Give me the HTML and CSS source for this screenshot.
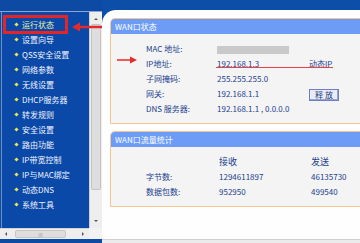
FILE: index.html
```html
<!DOCTYPE html>
<html lang="zh-CN">

<head>
    <meta charset="UTF-8">
    <title>WAN口状态</title>
    <link rel="stylesheet" href="styles.css">
</head>

<body>
    <div class="screen">
        <!-- left menu frame -->
        <div class="left">
            <div class="nav-frame">
                <ul class="menu">
                    <li class="on">运行状态</li>
                    <li>设置向导</li>
                    <li>QSS安全设置</li>
                    <li>网络参数</li>
                    <li>无线设置</li>
                    <li>DHCP服务器</li>
                    <li>转发规则</li>
                    <li>安全设置</li>
                    <li>路由功能</li>
                    <li>IP带宽控制</li>
                    <li>IP与MAC绑定</li>
                    <li>动态DNS</li>
                    <li>系统工具</li>
                </ul>
                <div class="vscroll">
                    <span class="arr arr-up"></span>
                    <div class="vthumb"></div>
                    <span class="arr arr-down"></span>
                </div>
            </div>
            <div class="hscroll-row">
                <div class="hscroll">
                    <span class="arr arr-left"></span>
                    <div class="hthumb"><span class="grip">III</span></div>
                    <span class="arr arr-right"></span>
                </div>
                <div class="corner"></div>
            </div>
        </div>

        <!-- main frame -->
        <div class="right">
            <div class="content">
                <div class="panel">
                    <div class="panel-head">WAN口状态</div>
                    <div class="panel-body grid-status">
                        <span>MAC 地址:</span><span><i class="mask"></i></span><span></span>
                        <span>IP地址:</span><span>192.168.1.3</span><span>动态IP</span>
                        <span>子网掩码:</span><span>255.255.255.0</span><span></span>
                        <span>网关:</span><span>192.168.1.1</span><span><button class="btn">释 放</button></span>
                        <span>DNS 服务器:</span><span class="wide">192.168.1.1 , 0.0.0.0</span>
                    </div>
                </div>

                <div class="panel">
                    <div class="panel-head">WAN口流量统计</div>
                    <div class="panel-body grid-traffic">
                        <span></span><span class="big">接收</span><span class="big">发送</span>
                        <span>字节数:</span><span>1294611897</span><span>46135730</span>
                        <span>数据包数:</span><span>952950</span><span>499540</span>
                    </div>
                </div>
            </div>
            <div class="bottom-line"></div>
        </div>

        <!-- markings drawn over the screenshot -->
        <div class="mark-box"></div>
        <svg class="mark-arrow-nav" width="30" height="10" viewBox="0 0 30 10">
            <path d="M0 5 L8 0.5 L8 3.8 L30 3.8 L30 6.2 L8 6.2 L8 9.5 Z" fill="#e42a2a"/>
        </svg>
        <svg class="mark-arrow-ip" width="20" height="8" viewBox="0 0 20 8">
            <path d="M20 4 L13 0.5 L13 3.2 L0 3.2 L0 4.8 L13 4.8 L13 7.5 Z" fill="#e42a2a"/>
        </svg>
        <div class="mark-line"></div>
    </div>
</body>

</html>
```

FILE: styles.css
```css
* {
    margin: 0;
    padding: 0;
    box-sizing: border-box;
}

body {
    width: 360px;
    height: 243px;
    overflow: hidden;
    background: #ececec;
    font-family: "Noto Sans CJK SC", "DejaVu Sans", sans-serif;
    font-size: 8px;
}

.screen {
    position: relative;
    display: flex;
    width: 360px;
    height: 243px;
}

/* left frame */
.left {
    width: 102px;
    display: flex;
    flex-direction: column;
    background: #0c4aa4;
    padding-top: 11px;
}

.nav-frame {
    display: flex;
    height: 217px;
    border-top: 1px solid #8aa6d6;
}

.menu {
    list-style: none;
    width: 88px;
    padding-top: 5px;
    border-left: 1px solid #6f8fc8;
    margin-left: 1px;
    background: #0a49a8;
}

.menu li {
    height: 15px;
    line-height: 15px;
    padding-left: 20px;
    color: #f2f4ff;
    position: relative;
    white-space: nowrap;
}

.menu li::before {
    content: "";
    position: absolute;
    left: 13px;
    top: 6px;
    width: 3px;
    height: 3px;
    background: #f3e64a;
    transform: rotate(45deg);
}

.menu li.on {
    color: #e9f2a6;
}

.vscroll {
    width: 13px;
    background: #eeeeee;
    border-left: 1px solid #d0d0d0;
    display: flex;
    flex-direction: column;
    align-items: center;
    padding: 2px 1px;
}

.vthumb {
    flex: 1;
    width: 10px;
    margin: 4px 0 30px;
    background: #dedede;
    border: 1px solid #c4c4c4;
    border-radius: 2px;
}

.arr {
    width: 0;
    height: 0;
    border: 2px solid transparent;
}

.arr-up {
    border-bottom-color: #555;
    margin-top: 2px;
}

.arr-down {
    border-top-color: #555;
    margin-bottom: 2px;
}

.arr-left {
    border-right-color: #555;
}

.arr-right {
    border-left-color: #555;
}

.hscroll-row {
    display: flex;
    height: 11px;
    background: #eeeeee;
}

.hscroll {
    width: 89px;
    display: flex;
    align-items: center;
    padding: 0 3px;
    gap: 8px;
    border-top: 1px solid #d4d4d4;
}

.hthumb {
    width: 56px;
    height: 8px;
    background: #dedede;
    border: 1px solid #c6c6c6;
    border-radius: 2px;
    display: flex;
    align-items: center;
    justify-content: center;
    margin-right: 8px;
}

.grip {
    font-size: 5px;
    line-height: 5px;
    color: #999;
}

.corner {
    flex: 1;
    background: #f2f2f2;
}

/* main frame */
.right {
    flex: 1;
    display: flex;
    flex-direction: column;
    background: #0d4fa8;
    padding-top: 10px;
}

.content {
    flex: 1;
    background: #fefefe;
    border-top-left-radius: 14px;
    padding: 8px 0 0 8px;
    overflow: hidden;
    display: flex;
    flex-direction: column;
    gap: 7px;
}

.bottom-line {
    height: 4px;
    background: #ebebeb;
    border-top: 1px solid #cfcfcf;
}

.panel {
    width: 262px;
    border: 1px solid #f6c58e;
    border-radius: 5px 5px 0 0;
    background: #f4f4f4;
}

.panel-head {
    height: 15px;
    line-height: 15px;
    padding-left: 4px;
    background: #6c9cf6;
    color: #ffffff;
    border-radius: 4px 4px 0 0;
}

.panel-body {
    display: grid;
    padding: 7px 0 7px 35px;
    color: #23418f;
}

.panel-body span {
    height: 15px;
    line-height: 15px;
    white-space: nowrap;
}

.grid-status {
    grid-template-columns: 71px 92px auto;
}

.grid-status .wide {
    grid-column: span 2;
}

.grid-traffic {
    grid-template-columns: 73px 92px auto;
}

.grid-traffic .big {
    font-size: 9px;
}

.mask {
    display: inline-block;
    width: 72px;
    height: 8px;
    background: #c9c9c9;
    vertical-align: middle;
}

.btn {
    width: 30px;
    height: 12px;
    font-family: inherit;
    font-size: 8px;
    line-height: 10px;
    color: #1f3a80;
    background: #e9ecf6;
    border: 1px solid #6d7fc4;
    box-shadow: inset -1px -1px 0 #9aa6cc;
    vertical-align: middle;
}

/* red markings */
.mark-box {
    position: absolute;
    left: 3px;
    top: 15px;
    width: 65px;
    height: 19px;
    border: 3px solid #e52525;
}

.mark-arrow-nav {
    position: absolute;
    left: 72px;
    top: 22px;
}

.mark-arrow-ip {
    position: absolute;
    left: 117px;
    top: 56px;
}

.mark-line {
    position: absolute;
    left: 216px;
    top: 67px;
    width: 117px;
    height: 1px;
    background: #e8404a;
}
```
